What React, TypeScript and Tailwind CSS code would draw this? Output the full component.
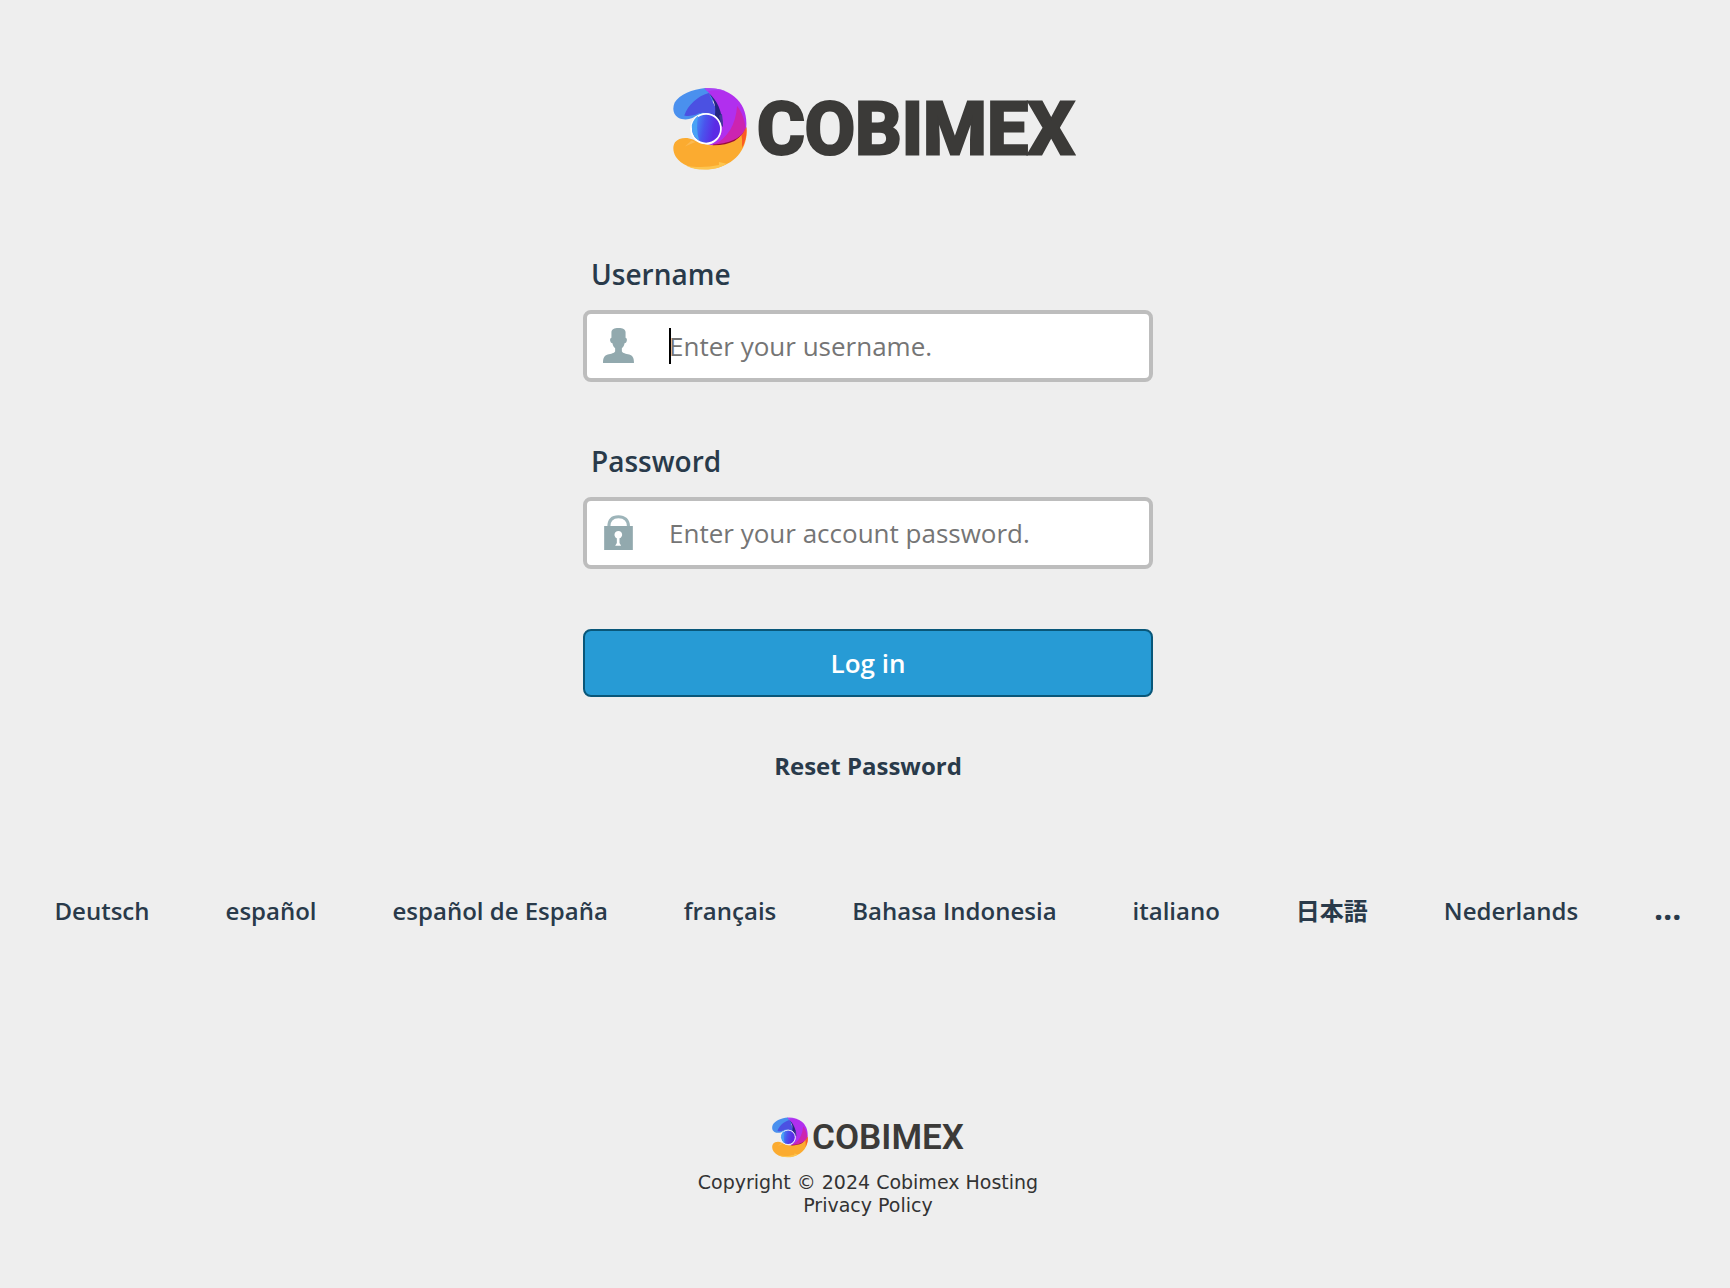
import { useState } from "react";
import type { ReactNode } from "react";

const languages = [
  { code: "de", name: "Deutsch" },
  { code: "es", name: "español" },
  { code: "es_es", name: "español de España" },
  { code: "fr", name: "français" },
  { code: "id", name: "Bahasa Indonesia" },
  { code: "it", name: "italiano" },
  { code: "ja", name: "日本語" },
  { code: "nl", name: "Nederlands" },
];

const LogoMark = ({ className }: { className: string }) => (
  <svg viewBox="38 38 224 248" className={className} aria-hidden="true">
    {/* blue arm */}
    <path
      d="M136 38C96 42 58 58 43 82c-8 20-4 36 10 45 14 8 30 7 44 2 12-9 26-15 42-14l24-48z"
      fill="#4a90ee"
    />
    <path d="M146 53C112 63 84 88 72 121c12 3 23 1 34-2 12-8 26-8 40-3l34 10z" fill="#4b51e2" />
    {/* purple and magenta sweep */}
    <path
      d="M134 39c34-3 66 5 90 25 25 21 38 51 36 88-1 26-9 45-24 60l-98-1c26-2 44-20 46-46 2-50-14-90-50-126z"
      fill="#b12fee"
    />
    <path d="M134 39c26-2 45 1 62 8-20-4-40-3-55 1z" fill="#a944f3" />
    <path d="M146 53c26 22 41 55 43 103l-7-8c-4-12-9-20-17-28 4-26-3-47-19-67z" fill="#232680" />
    <path d="M177 122l9-6c2 12 3 24 3 38l-6-6c-1-10-3-18-6-26z" fill="#43379c" />
    <path d="M232 92c22 28 31 68 24 104-32 13-64 16-96 14 44-20 68-62 72-118z" fill="#cc24b0" />
    <path d="M257 160c-4 22-38 46-97 49l-4 6 88-2z" fill="#970c3a" />
    {/* orange arm */}
    <path
      d="M99 194c-20-9-44-6-55 8-8 13-6 30 3 45 16 24 48 37 88 37 58 0 108-31 122-84 4-14 5-29 3-42-6 15-16 27-36 40-34 17-88 20-125-4z"
      fill="#fbab30"
    />
    <path d="M260 155c3 24-3 44-12 64l-4-36c6-8 12-18 16-28z" fill="#fb5a25" />
    <path d="M245 181c4 17 3 33-5 47l-8-33z" fill="#fbab30" />
    <path d="M78 273c39 8 70 3 99-2v-9l24 5c-30 21-89 24-123 6z" fill="#fdc550" />
    <path d="M74 215l20-18 12 4z" fill="#fcb951" />
    {/* centre ball */}
    <circle cx="138" cy="161" r="45" fill="url(#ball)" stroke="#fff" strokeWidth="5" />
    <path d="M95 150c4-14 10-22 19-28-5 24-4 51 3 75-14-9-23-26-22-47z" fill="#49a2f5" />
    <defs>
      <linearGradient id="ball" x1="0" y1="0" x2="1" y2="0.2">
        <stop offset="0.2" stopColor="#4689f4" />
        <stop offset="0.5" stopColor="#4a54ed" />
        <stop offset="0.85" stopColor="#5b2be5" />
      </linearGradient>
    </defs>
  </svg>
);

const UserIcon = () => (
  <svg viewBox="98 233 92 104" className="h-[35px] w-[31px]" aria-hidden="true">
    <path
      d="M144 233c-13 0-20 3-21 12v17c-4 1-5 6-3 11 1 4 3 5 6 5 1 7 4 11 8 15v9c-2 6-12 7-22 10-10 4-14 9-14 25h92c0-16-4-21-14-25-10-3-20-4-22-10v-9c4-4 7-8 8-15 3 0 5-1 6-5 2-5 1-10-3-11v-17c-1-9-8-12-21-12z"
      fill="#92a9ae"
    />
  </svg>
);

const LockIcon = () => (
  <svg viewBox="101 238 92 105" className="h-[35px] w-[31px]" aria-hidden="true">
    <path d="M118 273c0-20 11-30 29-30s30 10 30 30" fill="none" stroke="#9db4b9" strokeWidth="9" />
    <path
      fillRule="evenodd"
      d="M104 271h86v72h-86zM147 286c-15 0-15 18-5 22v14l-5 8h18l-5-8v-14c12-4 10-22-3-22z"
      fill="#92a9ae"
    />
  </svg>
);

type FieldProps = {
  id: string;
  label: string;
  type: string;
  placeholder: string;
  icon: ReactNode;
  caret?: boolean;
};

const Field = ({ id, label, type, placeholder, icon, caret }: FieldProps) => {
  const [value, setValue] = useState("");

  return (
    <div className="mb-[60px]">
      <label htmlFor={id} className="mb-4 block pl-2 text-[28px] leading-[39px] font-semibold">
        {label}
      </label>
      <div className="relative">
        <span className="pointer-events-none absolute inset-y-0 left-5 flex items-center pb-0.5">
          {icon}
        </span>
        <input
          id={id}
          type={type}
          value={value}
          placeholder={placeholder}
          onChange={(e) => setValue(e.target.value)}
          className="block h-[72px] w-full rounded-lg border-4 border-[#bdbdbd] bg-white pr-4 pl-[82px] text-[26px] text-black outline-none placeholder:text-[#757575]"
        />
        {caret && !value && (
          <span className="absolute top-[18px] left-[86px] h-9 w-0.5 bg-black" />
        )}
      </div>
    </div>
  );
};

const App = () => {
  return (
    <div className="min-h-screen bg-[#eeeeee] pt-[88px] pl-1.5 font-['Open_Sans','Noto_Sans_CJK_JP',sans-serif] text-[#293a4a]">
      <main className="mx-auto w-full max-w-[570px]">
        <div className="mb-[85px] flex items-center gap-2.5 pl-[90px]">
          <LogoMark className="h-[82px] w-[74px] shrink-0" />
          <span className="font-[Roboto,sans-serif] text-[73px] leading-[82px] font-bold text-[#3b3a38] [-webkit-text-stroke:3px_#3b3a38] [font-kerning:none] [paint-order:stroke]">
            COBIMEX
          </span>
        </div>

        <form onSubmit={(e) => e.preventDefault()}>
          <Field
            id="user"
            label="Username"
            type="text"
            placeholder="Enter your username."
            icon={<UserIcon />}
            caret
          />
          <Field
            id="pass"
            label="Password"
            type="password"
            placeholder="Enter your account password."
            icon={<LockIcon />}
          />
          <button
            type="submit"
            className="block h-[68px] w-full rounded-lg border-2 border-[#095779] bg-[#279bd5] text-[26px] font-semibold text-white"
          >
            Log in
          </button>
        </form>

        <div className="mt-[52px] text-center">
          <a href="#reset" className="block text-[24px] leading-[33px] font-bold">
            Reset Password
          </a>
        </div>
      </main>

      {/* locales */}
      <ul className="mt-[109px] flex items-baseline justify-center gap-[76px] text-[24px] leading-[33px] font-semibold whitespace-nowrap">
        {languages.map((language) => (
          <li key={language.code}>
            <a href={`#${language.code}`}>{language.name}</a>
          </li>
        ))}
        <li className="text-[32px] leading-[33px] font-bold">
          <a href="#more" aria-label="More languages">
            …
          </a>
        </li>
      </ul>

      <footer className="mt-[189px] pb-16 text-center font-['DejaVu_Sans',sans-serif] text-[19px] leading-[23px] text-[#333333]">
        <div className="mb-3 flex items-center justify-center gap-1">
          <LogoMark className="h-[43px] w-9" />
          <span className="font-[Roboto,sans-serif] text-[35px] leading-[43px] font-semibold text-[#3b3a38]">
            COBIMEX
          </span>
        </div>
        <p>Copyright © 2024 Cobimex Hosting</p>
        <a href="#privacy">Privacy Policy</a>
      </footer>
    </div>
  );
};

export default App;
